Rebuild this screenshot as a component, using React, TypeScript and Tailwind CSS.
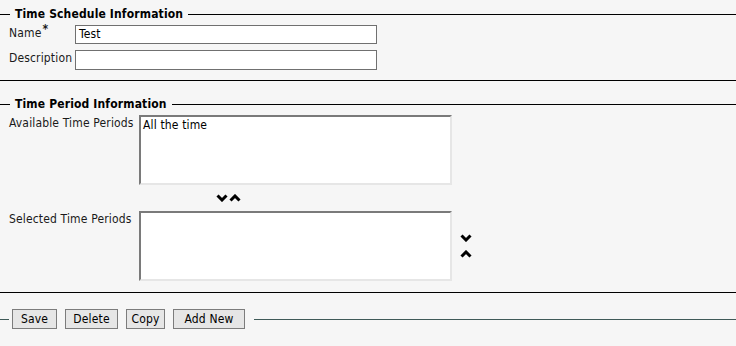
import React from 'react';

const font = { fontFamily: '"DejaVu Sans Condensed", "DejaVu Sans", Tahoma, sans-serif' };

function Legend({ title }: { title: string }) {
  return (
    <div className="flex items-center h-[14px]">
      <div className="w-[10px] border-t border-black" />
      <span className="px-[5px] text-[12px] font-bold text-black leading-none tracking-[0.15px]">{title}</span>
      <div className="flex-1 border-t border-black" />
    </div>
  );
}

function Chevron({ up }: { up?: boolean }) {
  return (
    <svg width="12" height="8" viewBox="0 0 12 8">
      <path
        d={up ? 'M1.5 6.5 L6 2 L10.5 6.5' : 'M1.5 1.5 L6 6 L10.5 1.5'}
        fill="none"
        stroke="#000"
        strokeWidth="3"
        strokeLinejoin="miter"
      />
    </svg>
  );
}

function ListBox({ children }: { children?: React.ReactNode }) {
  return (
    <div className="w-[313px] h-[70px] bg-white border-2 border-t-[#7a7a7a] border-l-[#7a7a7a] border-r-[#e6e6e6] border-b-[#e6e6e6] px-[2px] pt-[1px] text-[12px] text-black leading-[14px]">
      {children}
    </div>
  );
}

function Btn({ label, w }: { label: string; w: string }) {
  return (
    <button
      className={`${w} h-[20px] bg-[#e6e6e6] border border-[#7c7c7c] text-[12px] text-black flex items-center justify-center`}
    >
      {label}
    </button>
  );
}

export default function App() {
  return (
    <div className="w-[736px] h-[346px] bg-[#f6f6f6] text-[#1a1a1a] overflow-hidden tracking-[0.15px]" style={font}>
      {/* Time schedule */}
      <div className="h-[81px] pt-[7px] border-b border-black">
        <Legend title="Time Schedule Information" />
        <div className="flex items-start mt-[4px] text-[12px]">
          <div className="w-[75px] pl-[9px] pt-[1px] leading-[14px]">
            Name<span className="text-[12px] font-bold relative -top-[4px] ml-[1px]">*</span>
          </div>
          <div className="w-[302px] h-[19px] bg-white border border-[#707070] px-[3px] leading-[17px] text-black">
            Test
          </div>
        </div>
        <div className="flex items-start mt-[6px] text-[12px]">
          <div className="w-[75px] pl-[9px] pt-[1px] leading-[14px]">Description</div>
          <div className="w-[302px] h-[20px] bg-white border border-[#707070]" />
        </div>
      </div>

      {/* Time period */}
      <div className="h-[212px] pt-[16px] border-b border-black">
        <Legend title="Time Period Information" />
        <div className="flex items-start mt-[4px] text-[12px]">
          <div className="w-[139px] pl-[9px] leading-[14px] pt-[1px]">Available Time Periods</div>
          <ListBox>All the time</ListBox>
        </div>
        <div className="flex items-center gap-[1px] pl-[216px] mt-[9px] h-[8px]">
          <Chevron />
          <Chevron up />
        </div>
        <div className="flex items-start mt-[9px] text-[12px]">
          <div className="w-[139px] pl-[9px] leading-[14px] pt-[1px]">Selected Time Periods</div>
          <ListBox />
          <div className="flex flex-col gap-[8px] ml-[8px] mt-[23px]">
            <Chevron />
            <Chevron up />
          </div>
        </div>
      </div>

      {/* Buttons */}
      <div className="flex items-center mt-[16px]">
        <div className="w-[9px] border-t border-[#3f5a58]" />
        <div className="flex items-center gap-[8px] ml-[3px]">
          <Btn label="Save" w="w-[45px]" />
          <Btn label="Delete" w="w-[53px]" />
          <Btn label="Copy" w="w-[39px]" />
          <Btn label="Add New" w="w-[72px]" />
        </div>
        <div className="flex-1 ml-[9px] border-t border-[#3f5a58]" />
      </div>
    </div>
  );
}
